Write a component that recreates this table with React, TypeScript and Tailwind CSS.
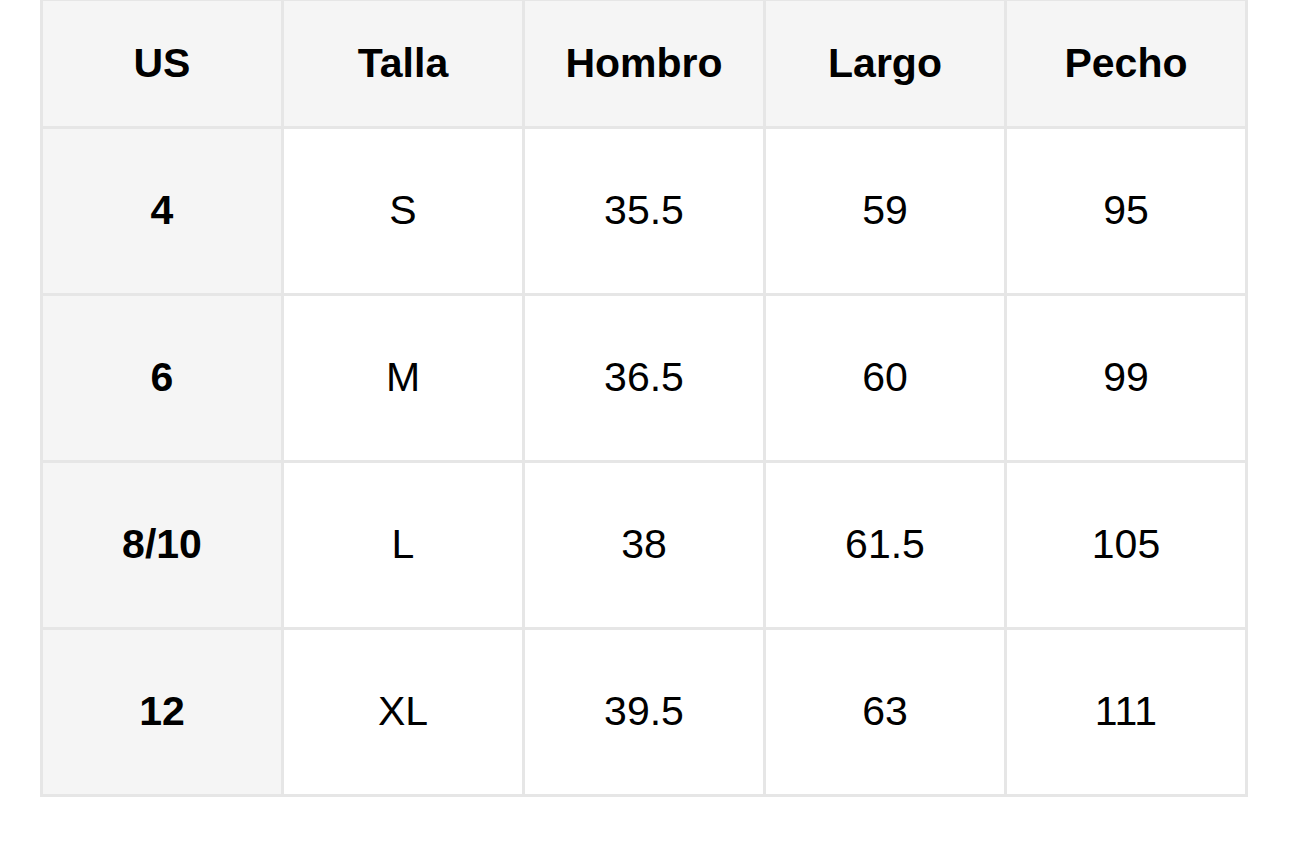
const headers = ["US", "Talla", "Hombro", "Largo", "Pecho"];

const rows = [
  ["4", "S", "35.5", "59", "95"],
  ["6", "M", "36.5", "60", "99"],
  ["8/10", "L", "38", "61.5", "105"],
  ["12", "XL", "39.5", "63", "111"],
];

export default function App() {
  return (
    <div
      className="w-[1290px] h-[844px] bg-white overflow-hidden"
      style={{ fontFamily: '"Liberation Sans", Arial, sans-serif' }}
    >
      {/* tabla de tallas */}
      <div className="ml-[40px] w-[1208px] mt-[-2px] grid grid-cols-5 gap-[3px] bg-[#e6e6e6] p-[3px] text-[41px] text-black">
        {headers.map((h) => (
          <div key={h} className="h-[125px] bg-[#f5f5f5] flex items-center justify-center font-bold">
            {h}
          </div>
        ))}
        {rows.map((row) =>
          row.map((cell, i) => (
            <div
              key={row[0] + "-" + i}
              className={
                i === 0
                  ? "h-[164px] bg-[#f5f5f5] flex items-center justify-center font-bold"
                  : "h-[164px] bg-white flex items-center justify-center"
              }
            >
              {cell}
            </div>
          ))
        )}
      </div>
    </div>
  );
}
